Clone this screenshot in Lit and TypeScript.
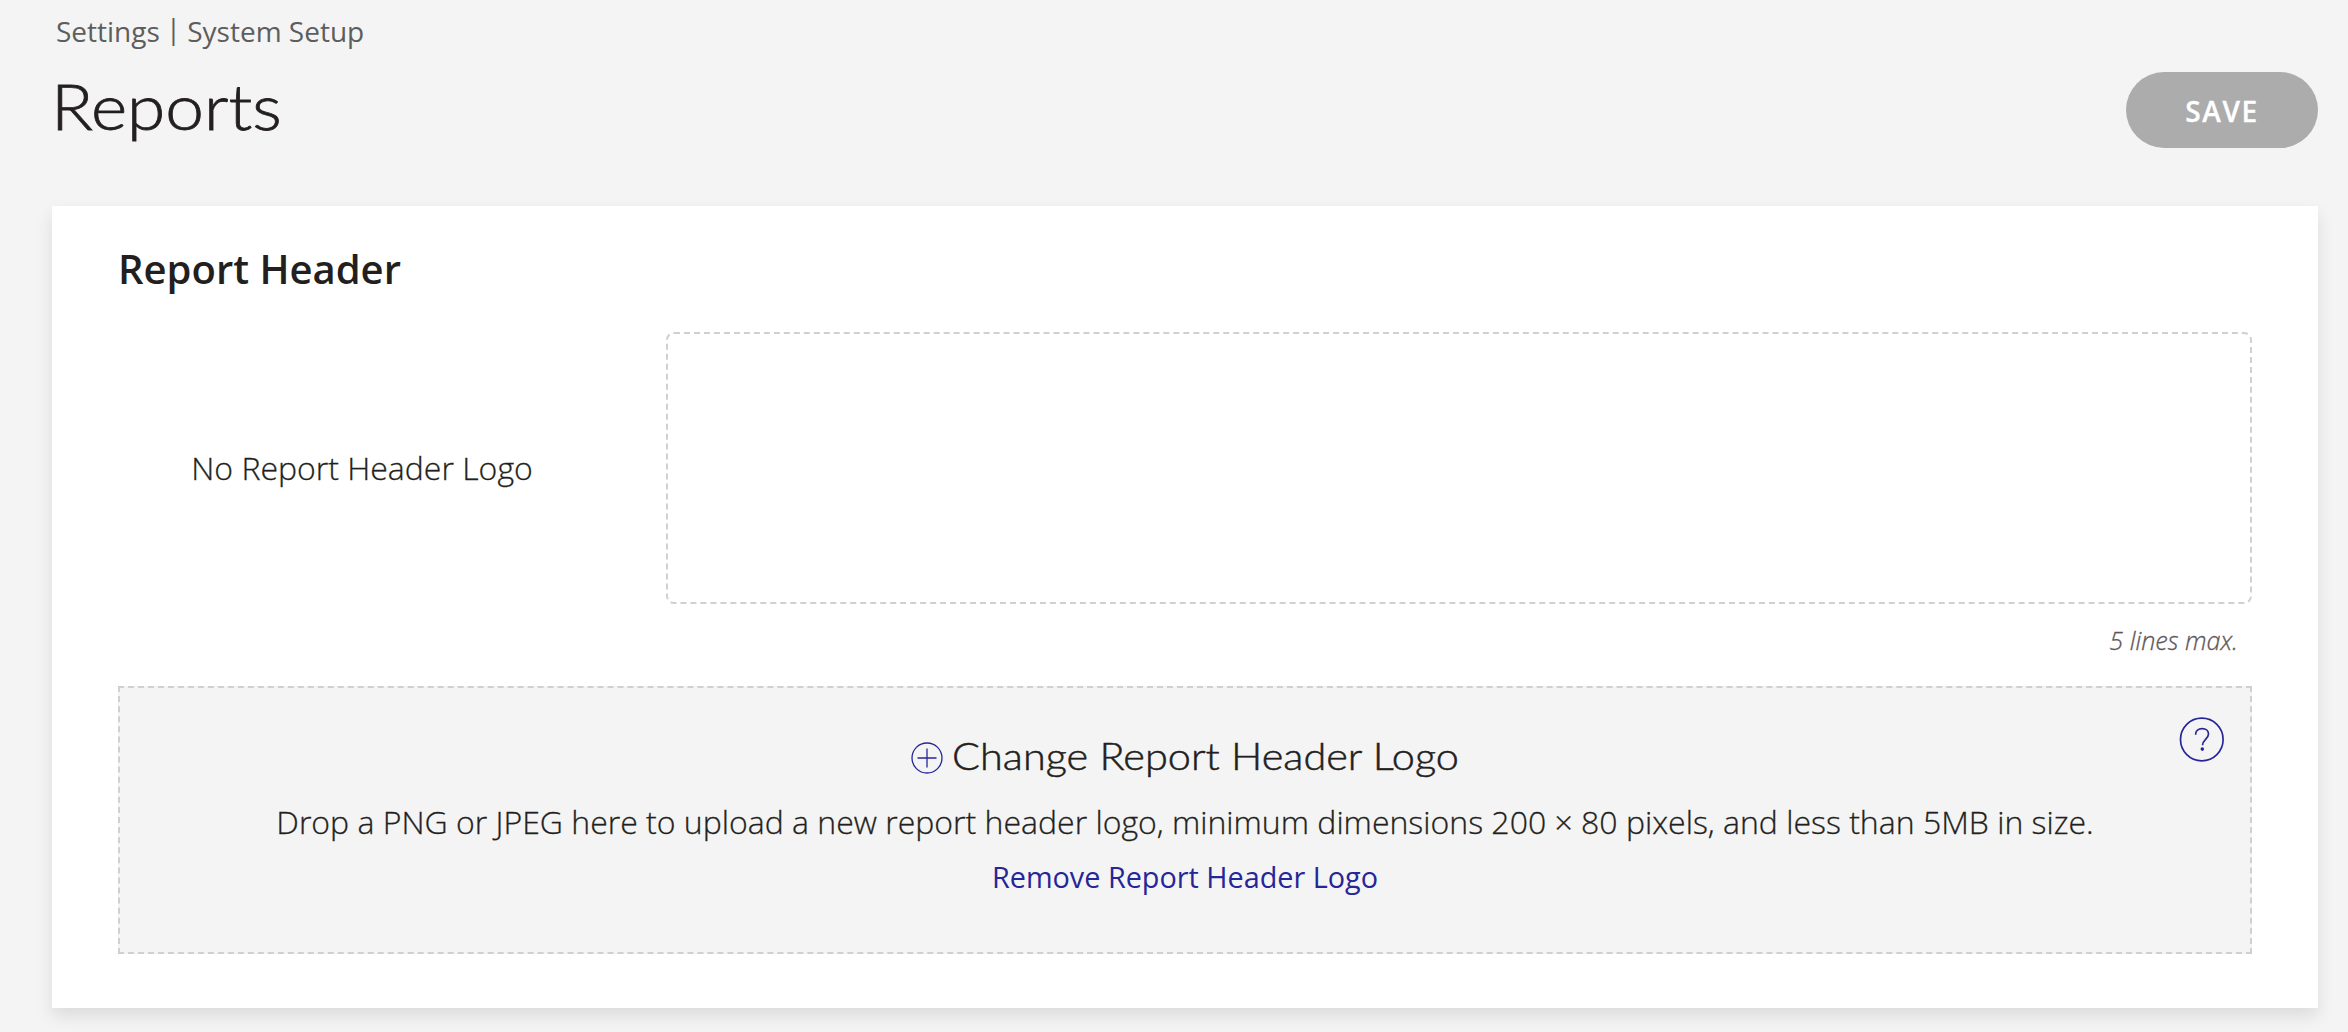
import { LitElement, html, css } from "lit";
import { customElement } from "lit/decorators.js";

@customElement("app-root")
export class AppRoot extends LitElement {
  static styles = css`
    :host {
      display: block;
      box-sizing: border-box;
      height: 1032px;
      overflow: hidden;
      padding: 11px 30px 0 52px;
      background: #f4f4f4;
      color: #231f20;
      font-family: "Open Sans", sans-serif;
    }
    * {
      box-sizing: border-box;
    }
    .crumbs {
      display: flex;
      gap: 6px;
      padding-left: 4px;
      font-size: 28px;
      line-height: 40px;
      color: #5d5d5d;
      white-space: nowrap;
    }
    .divider {
      transform: translateY(-3px);
    }
    .top {
      display: flex;
      justify-content: space-between;
      height: 155px;
    }
    h1 {
      margin: 15px 0 0 -1px;
      font: 300 64px/80px Lato, sans-serif;
      transform: scaleX(1.083);
      transform-origin: left;
      -webkit-text-stroke: 0.8px currentColor;
    }
    .save {
      margin: 21px 0 0;
      width: 192px;
      height: 76px;
      padding: 2px 0 0;
      border: 0;
      border-radius: 38px;
      background: #acacac;
      color: #fff;
      font: 600 28px/38px "Open Sans", sans-serif;
      letter-spacing: 1.6px;
      -webkit-text-stroke: 0.3px currentColor;
    }
    .card {
      height: 802px;
      padding: 36px 66px 0;
      background: #fff;
      box-shadow: 0 8px 16px rgba(0, 0, 0, 0.1);
    }
    h2 {
      margin: 0 0 36px;
      font: 600 40px/54px "Open Sans", sans-serif;
    }
    .row {
      display: flex;
      gap: 60px;
      height: 272px;
    }
    .logo {
      display: flex;
      align-items: center;
      justify-content: center;
      width: 488px;
      padding-bottom: 1px;
      font-size: 32px;
      font-weight: 300;
      line-height: 44px;
      -webkit-text-stroke: 0.3px currentColor;
    }
    .lines {
      flex: 1;
      border: 2px dashed #d0d0d0;
      border-radius: 8px;
    }
    .hint {
      margin: 18px 14px 28px 0;
      text-align: right;
      font: italic 300 25.2px/36px "Open Sans", sans-serif;
      color: #5f585a;
      -webkit-text-stroke: 0.3px currentColor;
    }
    .drop {
      position: relative;
      height: 268px;
      padding-top: 40px;
      border: 2px dashed #d0d0d0;
      background: #f4f4f4;
      text-align: center;
    }
    .change {
      display: flex;
      align-items: center;
      justify-content: center;
      gap: 9px;
      height: 54px;
      font: 300 38px/54px Lato, sans-serif;
    }
    .label {
      width: 507px;
      text-align: left;
      white-space: nowrap;
      transform: scaleX(1.091);
      transform-origin: left;
    }
    .label span {
      -webkit-text-stroke: 0.5px currentColor;
    }
    .plus {
      width: 32px;
      height: 32px;
      margin-top: 5px;
    }
    .desc {
      margin-top: 18px;
      font-size: 32px;
      font-weight: 300;
      line-height: 44px;
      -webkit-text-stroke: 0.3px currentColor;
    }
    .remove {
      margin-top: 14px;
      font-size: 28.8px;
      line-height: 38px;
      color: #262698;
    }
    .help {
      position: absolute;
      right: 26px;
      top: 29px;
      width: 45px;
      height: 45px;
    }
    .icon {
      fill: none;
      stroke: #262698;
    }
    .dot {
      fill: #262698;
      stroke: none;
    }
  `;

  render() {
    return html`
      <nav class="crumbs">
        <span>Settings</span><span class="divider">|</span><span>System Setup</span>
      </nav>
      <header class="top">
        <h1>Reports</h1>
        <button class="save">SAVE</button>
      </header>
      <section class="card">
        <h2>Report Header</h2>
        <div class="row">
          <div class="logo">No Report Header Logo</div>
          <div class="lines"></div>
        </div>
        <div class="hint">5 lines max.</div>
        <div class="drop">
          <div class="change">
            <svg class="icon plus" viewBox="0 0 32 32" stroke-width="1.3">
              <circle cx="16" cy="16" r="15"></circle>
              <path d="M16 6.5v19M6.5 16h19"></path>
            </svg>
            <div class="label"><span>Change Report Header Logo</span></div>
          </div>
          <div class="desc">
            Drop a PNG or JPEG here to upload a new report header logo, minimum dimensions 200 × 80 pixels, and less than 5MB in size.
          </div>
          <div class="remove">Remove Report Header Logo</div>
          <svg class="icon help" viewBox="0 0 45 45" stroke-width="1.7">
            <circle cx="22.8" cy="22.5" r="21.3"></circle>
            <path d="M16.7 17.8v-1c0-3.2 2.6-5.1 6.5-5.1s6.3 2.3 6.3 5.3c0 5-6 5.8-6 11.2"></path>
            <circle class="dot" cx="23.3" cy="32.1" r="1.8"></circle>
          </svg>
        </div>
      </section>
    `;
  }
}
